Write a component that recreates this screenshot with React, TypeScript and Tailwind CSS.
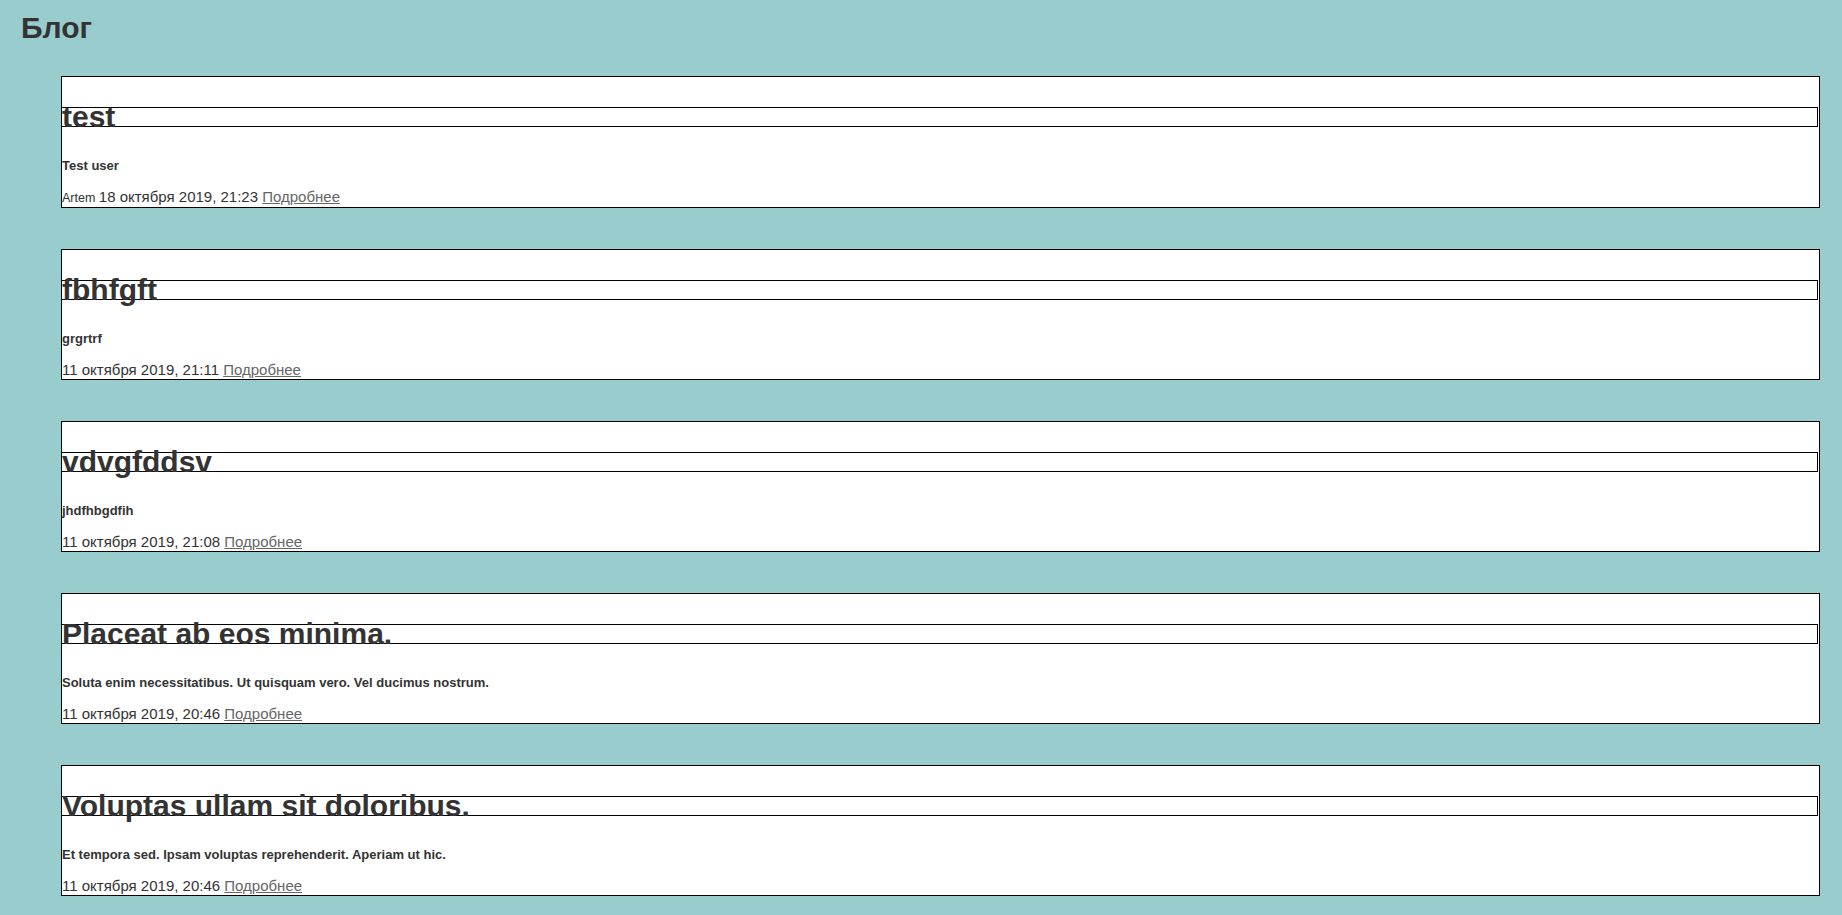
const POSTS = [
  { title: "test", text: "Test user", author: "Artem", date: "18 октября 2019, 21:23" },
  { title: "fbhfgft", text: "grgrtrf", author: "", date: "11 октября 2019, 21:11" },
  { title: "vdvgfddsv", text: "jhdfhbgdfih", author: "", date: "11 октября 2019, 21:08" },
  { title: "Placeat ab eos minima.", text: "Soluta enim necessitatibus. Ut quisquam vero. Vel ducimus nostrum.", author: "", date: "11 октября 2019, 20:46" },
  { title: "Voluptas ullam sit doloribus.", text: "Et tempora sed. Ipsam voluptas reprehenderit. Aperiam ut hic.", author: "", date: "11 октября 2019, 20:46" },
];

export default function App() {
  return (
    <div className="min-h-screen bg-[#99cccc] pl-[21px] pr-[22px] pt-[11px] font-['Liberation_Sans',Arial,sans-serif] text-[15px] text-[#333]">
      <h1 className="text-[30px] font-bold leading-[34px]">Блог</h1>

      {/* Posts */}
      <ul className="mt-[31px] pl-[40px]">
        {POSTS.map((post, i) => (
          <li key={i} className="mb-[41px] border border-black bg-white">
            <h2 className="-ml-px mr-px mt-[30px] border border-black text-[30px] font-bold leading-[18px]">
              {post.title}
            </h2>
            <h5 className="mt-[31px] text-[13px] font-bold leading-[15px]">{post.text}</h5>
            <p className="mt-[15px] leading-[18px]">
              {post.author && <small className="text-[12.5px]">{post.author} </small>}
              {post.date}{" "}
              <a href="#" className="text-[#666] underline">Подробнее</a>
            </p>
          </li>
        ))}
      </ul>
    </div>
  );
}
